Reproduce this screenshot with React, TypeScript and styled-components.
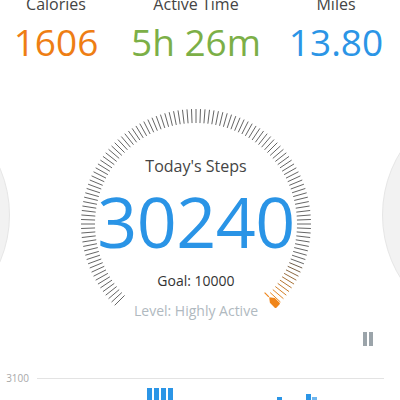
import React from "react";
import styled, { createGlobalStyle } from "styled-components";

const Global = createGlobalStyle`
  html, body { margin: 0; padding: 0; background: #ffffff; }
  body { width: 400px; height: 400px; overflow: hidden; font-family: "Open Sans", "Noto Sans", sans-serif; }
`;

const Page = styled.div`
  width: 400px;
  height: 400px;
  overflow: hidden;
  position: relative;
  background: #fff;
`;

const Stage = styled.div`
  width: 392px;
  display: flex;
  flex-direction: column;
`;

const StatsRow = styled.div`
  display: flex;
  justify-content: center;
  margin-top: -7px;
`;

const Stat = styled.div`
  flex: 0 0 140px;
  display: flex;
  flex-direction: column;
  align-items: center;
  gap: 5px;
`;

const StatLabel = styled.div`
  font-size: 16px;
  line-height: 22px;
  color: #444;
`;

const StatValue = styled.div<{ $color: string }>`
  font-size: 37px;
  line-height: 44px;
  color: ${(p) => p.$color};
`;

const Carousel = styled.div`
  display: flex;
  justify-content: center;
  align-items: flex-start;
  gap: 66px;
  height: 240px;
  margin-top: 40px;
`;

const SideDial = styled.div`
  flex: 0 0 240px;
  height: 240px;
  margin-top: -9px;
  border-radius: 50%;
  background: #f2f2f2;
  box-sizing: border-box;
  border: 1px solid #e6e6e6;
`;

const Gauge = styled.div`
  flex: 0 0 240px;
  height: 240px;
  display: grid;
`;

const GaugeArt = styled.svg`
  grid-area: 1 / 1;
  width: 240px;
  height: 240px;
`;

const GaugeText = styled.div`
  grid-area: 1 / 1;
  display: flex;
  flex-direction: column;
  align-items: center;
  padding-top: 54px;
`;

const Title = styled.div`
  font-size: 16px;
  line-height: 16px;
  color: #444;
`;

const Steps = styled.div`
  font-size: 70px;
  line-height: 90px;
  color: #2a94e6;
  margin-top: 2px;
  letter-spacing: -0.5px;
`;

const Goal = styled.div`
  font-size: 14px;
  line-height: 19px;
  color: #333;
  margin-top: 5px;
`;

const Level = styled.div`
  font-size: 14px;
  line-height: 19px;
  color: #b0b9c0;
  margin-top: 11px;
`;

const ControlRow = styled.div`
  display: flex;
  justify-content: flex-end;
  padding-right: 19px;
  margin-top: -12px;
`;

const PauseButton = styled.div`
  display: flex;
  gap: 2px;
  height: 14px;
`;

const PauseBar = styled.span`
  width: 4px;
  height: 14px;
  background: #9ba4aa;
`;

const Chart = styled.div`
  width: 400px;
  margin-top: 26px;
  display: flex;
  flex-direction: column;
`;

const AxisRow = styled.div`
  display: flex;
  align-items: center;
  height: 12px;
`;

const AxisLabel = styled.div`
  width: 37px;
  box-sizing: border-box;
  padding-right: 8px;
  text-align: right;
  font-size: 10px;
  line-height: 12px;
  color: #a8a8a8;
`;

const GridLine = styled.div`
  flex: 1;
  height: 1px;
  background: #e3e3e3;
  margin-right: 16px;
`;

const Bars = styled.svg`
  width: 400px;
  height: 16px;
`;

function mix(a: string, b: string, t: number) {
  const pa = [1, 3, 5].map((i) => parseInt(a.slice(i, i + 2), 16));
  const pb = [1, 3, 5].map((i) => parseInt(b.slice(i, i + 2), 16));
  const c = pa.map((v, i) => Math.round(v + (pb[i] - v) * t));
  return `rgb(${c[0]},${c[1]},${c[2]})`;
}

function Ticks() {
  const cx = 120;
  const cy = 120;
  const items = [];
  for (let i = 0; i < 120; i++) {
    const a = ((-135 + i * 2.25) * Math.PI) / 180;
    const r1 = 101;
    const r2 = 115;
    const x1 = cx + r1 * Math.sin(a);
    const y1 = cy - r1 * Math.cos(a);
    const x2 = cx + r2 * Math.sin(a);
    const y2 = cy - r2 * Math.cos(a);
    let color = "#666666";
    if (i >= 110) color = mix("#6e5e4c", "#f08a1e", (i - 110) / 9);
    items.push(
      <line key={i} x1={x1} y1={y1} x2={x2} y2={y2} stroke={color} strokeWidth={1} />
    );
  }
  return <>{items}</>;
}

export default function App() {
  return (
    <Page>
      <Global />
      <Stage>
        <StatsRow>
          <Stat>
            <StatLabel>Calories</StatLabel>
            <StatValue $color="#ee7e14">1606</StatValue>
          </Stat>
          <Stat>
            <StatLabel>Active Time</StatLabel>
            <StatValue $color="#7caf47">5h 26m</StatValue>
          </Stat>
          <Stat>
            <StatLabel>Miles</StatLabel>
            <StatValue $color="#2b95e6">13.80</StatValue>
          </Stat>
        </StatsRow>
        <Carousel>
          <SideDial />
          <Gauge>
            <GaugeArt viewBox="0 0 240 240">
              <Ticks />
              <g transform="rotate(135 120 120)" fill="#f0851a">
                <line x1="120" y1="23" x2="120" y2="17" stroke="#f0851a" strokeWidth="1.2" />
                <path d="M116.5 5.5 Q116.5 4 118 4 L122 4 Q123.5 4 123.5 5.5 L123.5 12 L120 16.5 L116.5 12 Z" />
              </g>
            </GaugeArt>
            <GaugeText>
              <Title>Today's Steps</Title>
              <Steps>30240</Steps>
              <Goal>Goal: 10000</Goal>
              <Level>Level: Highly Active</Level>
            </GaugeText>
          </Gauge>
          <SideDial />
        </Carousel>
        <ControlRow>
          <PauseButton>
            <PauseBar />
            <PauseBar />
          </PauseButton>
        </ControlRow>
      </Stage>
      <Chart>
        <AxisRow>
          <AxisLabel>3100</AxisLabel>
          <GridLine />
        </AxisRow>
        <Bars viewBox="0 0 400 16">
          <g fill="#2b95e6">
            <rect x="147" y="4" width="5" height="12" />
            <rect x="154" y="4" width="5" height="12" />
            <rect x="161" y="4" width="5" height="12" />
            <rect x="168" y="4" width="5" height="12" />
            <rect x="277" y="13" width="5" height="3" />
            <rect x="306" y="10" width="5" height="6" />
            <rect x="312" y="13" width="5" height="3" fill="#6fb6ee" />
          </g>
        </Bars>
      </Chart>
    </Page>
  );
}
